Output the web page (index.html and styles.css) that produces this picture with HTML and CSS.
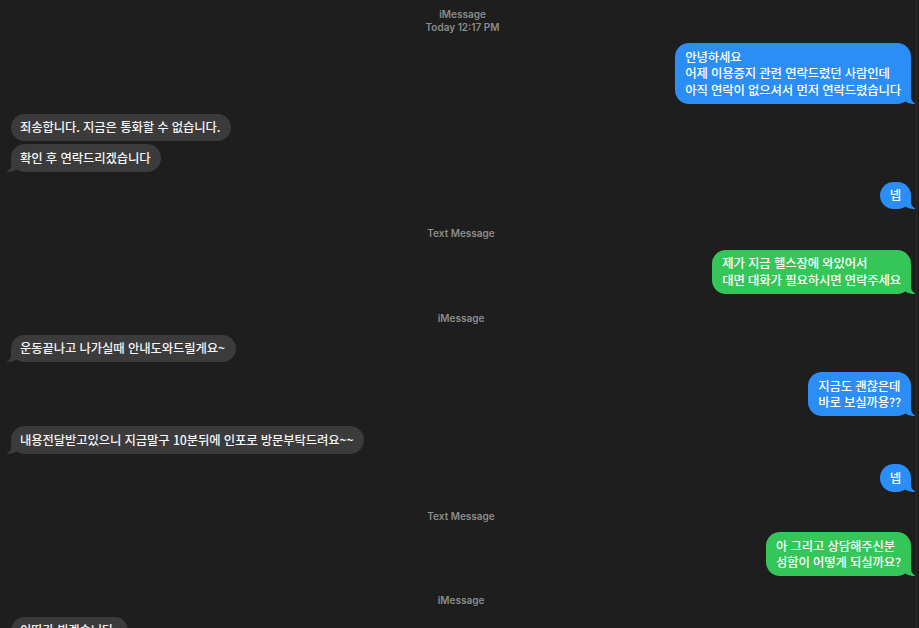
FILE: index.html
```html
<!DOCTYPE html>
<html lang="ko">
<head>
<meta charset="utf-8">
<title>Messages</title>
<link rel="stylesheet" href="styles.css">
</head>
<body>
<div class="chat">
  <div class="label first"><div>iMessage</div><div>Today 12:17 PM</div></div>
  <div class="msg out blue tail top">안녕하세요<br>어제 이용중지 관련 연락드렸던 사람인데<br>아직 연락이 없으셔서 먼저 연락드렸습니다</div>
  <div class="msg in">죄송합니다. 지금은 통화할 수 없습니다.</div>
  <div class="msg in tail cont">확인 후 연락드리겠습니다</div>
  <div class="msg out blue tail">넵</div>
  <div class="label">Text Message</div>
  <div class="msg out green tail after-label">제가 지금 헬스장에 와있어서<br>대면 대화가 필요하시면 연락주세요</div>
  <div class="label">iMessage</div>
  <div class="msg in tail after-label">운동끝나고 나가실때 안내도와드릴게요~</div>
  <div class="msg out blue tail">지금도 괜찮은데<br>바로 보실까용??</div>
  <div class="msg in tail">내용전달받고있으니 지금말구 10분뒤에 인포로 방문부탁드려요~~</div>
  <div class="msg out blue tail">넵</div>
  <div class="label">Text Message</div>
  <div class="msg out green tail after-label">아 그리고 상담해주신분<br>성함이 어떻게 되실까요?</div>
  <div class="label">iMessage</div>
  <div class="msg in tail after-label last">이따가 뵙겠습니다.</div>
</div>
<div class="edge"></div>
</body>
</html>
```
FILE: styles.css
```css
html, body {
  margin: 0;
  padding: 0;
  background: #1e1e1e;
  height: 100%;
  overflow: hidden;
}
body {
  font-family: "Noto Sans CJK KR", "Noto Sans", sans-serif;
}
.chat {
  display: flex;
  flex-direction: column;
  padding: 8px 8px 0 11px;
}
.label {
  align-self: center;
  text-align: center;
  font-family: "Inter", "Liberation Sans", sans-serif;
  font-size: 10px;
  font-weight: 600;
  line-height: 13px;
  color: #8b8b8b;
  margin: 18px 0 0 0;
}
.label.first {
  margin: 0;
  margin-left: 3px;
}
.msg {
  position: relative;
  z-index: 0;
  white-space: nowrap;
  font-size: 12.4px;
  font-weight: 500;
  line-height: 16.5px;
  padding: 5.5px 10px;
  border-radius: 14px;
  margin-top: 10.2px;
  color: #f4f4f4;
  letter-spacing: -0.15px;
}
.msg.top {
  margin-top: 9px;
}
.msg.after-label {
  margin-top: 9.6px;
}
.msg.cont {
  margin-top: 3px;
}
.msg.in {
  align-self: flex-start;
  background: #3b3b3c;
  padding-left: 9px;
  padding-right: 11px;
}
.msg.out {
  align-self: flex-end;
  color: #ffffff;
}
.msg.blue { background: #2a8ef6; }
.msg.green { background: #35c659; }

.msg.tail::before,
.msg.tail::after {
  content: "";
  position: absolute;
  bottom: 0;
  height: 14px;
  z-index: -1;
}
.msg.out.tail::before {
  right: -4px;
  width: 14px;
  background: inherit;
  border-bottom-left-radius: 12px 10px;
}
.msg.out.tail::after {
  right: -10px;
  width: 10px;
  background: #1e1e1e;
  border-bottom-left-radius: 7px;
}
.msg.in.tail::before {
  left: -4px;
  width: 14px;
  background: #3b3b3c;
  border-bottom-right-radius: 12px 10px;
}
.msg.in.tail::after {
  left: -10px;
  width: 10px;
  background: #1e1e1e;
  border-bottom-right-radius: 7px;
}
.edge {
  position: fixed;
  top: 0;
  right: 2px;
  width: 1px;
  height: 100%;
  background: #2a2a2a;
}
```
